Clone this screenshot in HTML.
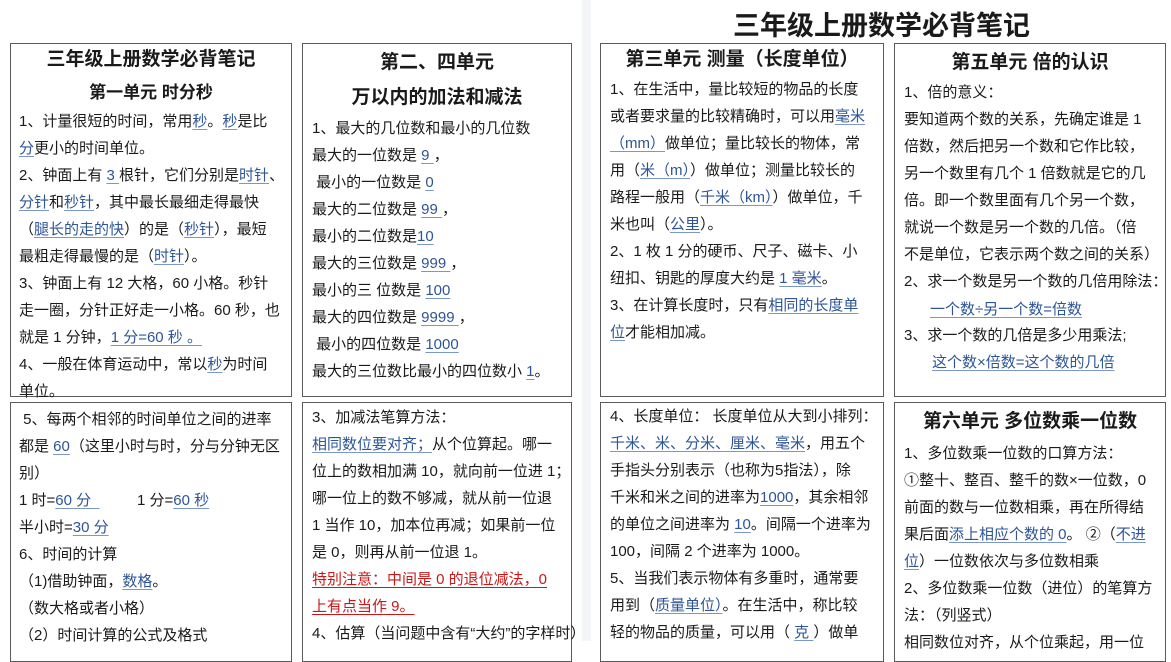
<!DOCTYPE html>
<html><head><meta charset="utf-8"><style>
*{margin:0;padding:0;box-sizing:border-box}
body{width:1171px;height:641px;overflow:hidden;background:#fff;position:relative;font-family:"Liberation Sans","Noto Sans CJK SC",sans-serif;color:#1a1a1a}
.strip{position:absolute;left:582px;top:0;width:9px;height:641px;background:#f4f5f8}
.box{position:absolute;border:1.5px solid #5a5a5a}
.l{position:absolute;white-space:nowrap;font-size:15px;line-height:20px;margin-top:2px}
.t{position:absolute;white-space:nowrap;font-weight:bold;text-align:center;line-height:26px}
.u{color:#2e5596;text-decoration:underline;text-decoration-color:#7b97c8;text-underline-offset:3px}
.r{color:#c81818;text-decoration:underline;text-underline-offset:3px}
</style></head><body>
<div class="strip"></div>
<div class="t" style="left:592px;width:579px;top:11px;font-size:27px;line-height:30px">三年级上册数学必背笔记</div>

<div class="box" style="left:10px;top:43px;width:282px;height:354px"></div>
<div class="box" style="left:302px;top:43px;width:270px;height:354px"></div>
<div class="box" style="left:600px;top:43px;width:284px;height:354px"></div>
<div class="box" style="left:894px;top:43px;width:272px;height:354px"></div>
<div class="box" style="left:10px;top:402px;width:282px;height:260px"></div>
<div class="box" style="left:302px;top:402px;width:270px;height:260px"></div>
<div class="box" style="left:600px;top:402px;width:284px;height:260px"></div>
<div class="box" style="left:894px;top:402px;width:272px;height:260px"></div>

<!-- Box A -->
<div class="t" style="left:10px;width:282px;top:47px;font-size:19px">三年级上册数学必背笔记</div>
<div class="t" style="left:10px;width:282px;top:80px;font-size:17px">第一单元 时分秒</div>
<div class="l" style="left:19px;top:110px">1、计量很短的时间，常用<span class="u">秒</span>。<span class="u">秒</span>是比</div>
<div class="l" style="left:19px;top:137px"><span class="u">分</span>更小的时间单位。</div>
<div class="l" style="left:19px;top:164px">2、钟面上有 <span class="u">3 </span>根针，它们分别是<span class="u">时针</span>、</div>
<div class="l" style="left:19px;top:191px"><span class="u">分针</span>和<span class="u">秒针</span>，其中最长最细走得最快</div>
<div class="l" style="left:19px;top:218px">（<span class="u">腿长的走的快</span>）的是（<span class="u">秒针</span>），最短</div>
<div class="l" style="left:19px;top:245px">最粗走得最慢的是（<span class="u">时针</span>）。</div>
<div class="l" style="left:19px;top:272px">3、钟面上有 12 大格，60 小格。秒针</div>
<div class="l" style="left:19px;top:299px">走一圈，分针正好走一小格。60 秒，也</div>
<div class="l" style="left:19px;top:326px">就是 1 分钟，<span class="u">1 分=60 秒 。</span></div>
<div class="l" style="left:19px;top:353px">4、一般在体育运动中，常以<span class="u">秒</span>为时间</div>
<div class="l" style="left:19px;top:380px">单位。</div>

<!-- Box B -->
<div class="t" style="left:302px;width:270px;top:50px;font-size:19px">第二、四单元</div>
<div class="t" style="left:302px;width:270px;top:85px;font-size:19px">万以内的加法和减法</div>
<div class="l" style="left:312px;top:117px">1、最大的几位数和最小的几位数</div>
<div class="l" style="left:312px;top:144px">最大的一位数是 <span class="u">9 </span>，</div>
<div class="l" style="left:312px;top:171px">&nbsp;最小的一位数是 <span class="u">0</span></div>
<div class="l" style="left:312px;top:198px">最大的二位数是 <span class="u">99 </span>，</div>
<div class="l" style="left:312px;top:225px">最小的二位数是<span class="u">10</span></div>
<div class="l" style="left:312px;top:252px">最大的三位数是 <span class="u">999 </span>，</div>
<div class="l" style="left:312px;top:279px">最小的三 位数是 <span class="u">100</span></div>
<div class="l" style="left:312px;top:306px">最大的四位数是 <span class="u">9999 </span>，</div>
<div class="l" style="left:312px;top:333px">&nbsp;最小的四位数是 <span class="u">1000</span></div>
<div class="l" style="left:312px;top:360px">最大的三位数比最小的四位数小 <span class="u">1</span>。</div>

<!-- Box C -->
<div class="t" style="left:600px;width:284px;top:47px;font-size:19px">第三单元 测量（长度单位）</div>
<div class="l" style="left:610px;top:78px">1、在生活中，量比较短的物品的长度</div>
<div class="l" style="left:610px;top:105px">或者要求量的比较精确时，可以用<span class="u">毫米</span></div>
<div class="l" style="left:610px;top:132px"><span class="u">（mm）</span>做单位；量比较长的物体，常</div>
<div class="l" style="left:610px;top:159px">用（<span class="u">米（m）</span>）做单位；测量比较长的</div>
<div class="l" style="left:610px;top:186px">路程一般用（<span class="u">千米（km）</span>）做单位，千</div>
<div class="l" style="left:610px;top:213px">米也叫（<span class="u">公里</span>）。</div>
<div class="l" style="left:610px;top:240px">2、1 枚 1 分的硬币、尺子、磁卡、小</div>
<div class="l" style="left:610px;top:267px">纽扣、钥匙的厚度大约是 <span class="u">1 毫米</span>。</div>
<div class="l" style="left:610px;top:294px">3、在计算长度时，只有<span class="u">相同的长度单</span></div>
<div class="l" style="left:610px;top:321px"><span class="u">位</span>才能相加减。</div>

<!-- Box D -->
<div class="t" style="left:894px;width:272px;top:50px;font-size:19px">第五单元 倍的认识</div>
<div class="l" style="left:904px;top:81px">1、倍的意义：</div>
<div class="l" style="left:904px;top:108px">要知道两个数的关系，先确定谁是 1</div>
<div class="l" style="left:904px;top:135px">倍数，然后把另一个数和它作比较，</div>
<div class="l" style="left:904px;top:162px">另一个数里有几个 1 倍数就是它的几</div>
<div class="l" style="left:904px;top:189px">倍。即一个数里面有几个另一个数，</div>
<div class="l" style="left:904px;top:216px">就说一个数是另一个数的几倍。（倍</div>
<div class="l" style="left:904px;top:243px">不是单位，它表示两个数之间的关系）</div>
<div class="l" style="left:904px;top:270px">2、求一个数是另一个数的几倍用除法：</div>
<div class="l" style="left:930px;top:298px"><span class="u">一个数÷另一个数=倍数</span></div>
<div class="l" style="left:904px;top:324px">3、求一个数的几倍是多少用乘法;</div>
<div class="l" style="left:932px;top:351px"><span class="u">这个数×倍数=这个数的几倍</span></div>

<!-- Box E -->
<div class="l" style="left:19px;top:408px">&nbsp;5、每两个相邻的时间单位之间的进率</div>
<div class="l" style="left:19px;top:435px">都是 <span class="u">60</span>（这里小时与时，分与分钟无区</div>
<div class="l" style="left:19px;top:462px">别）</div>
<div class="l" style="left:19px;top:489px">1 时=<span class="u">60 分 &nbsp;</span>&nbsp;&nbsp;&nbsp;&nbsp;&nbsp;&nbsp;&nbsp;&nbsp;&nbsp;1 分=<span class="u">60 秒</span></div>
<div class="l" style="left:19px;top:516px">半小时=<span class="u">30 分</span></div>
<div class="l" style="left:19px;top:543px">6、时间的计算</div>
<div class="l" style="left:19px;top:570px">（1)借助钟面，<span class="u">数格</span>。</div>
<div class="l" style="left:19px;top:597px">（数大格或者小格）</div>
<div class="l" style="left:19px;top:624px">（2）时间计算的公式及格式</div>

<!-- Box F -->
<div class="l" style="left:312px;top:406px">3、加减法笔算方法：</div>
<div class="l" style="left:312px;top:433px"><span class="u">相同数位要对齐；</span>从个位算起。哪一</div>
<div class="l" style="left:312px;top:460px">位上的数相加满 10，就向前一位进 1；</div>
<div class="l" style="left:312px;top:487px">哪一位上的数不够减，就从前一位退</div>
<div class="l" style="left:312px;top:514px">1 当作 10，加本位再减；如果前一位</div>
<div class="l" style="left:312px;top:541px">是 0，则再从前一位退 1。</div>
<div class="l" style="left:312px;top:568px"><span class="r">特别注意：中间是 0 的退位减法，0</span></div>
<div class="l" style="left:312px;top:595px"><span class="r">上有点当作 9。 </span></div>
<div class="l" style="left:312px;top:622px">4、估算（当问题中含有“大约”的字样时）</div>

<!-- Box G -->
<div class="l" style="left:610px;top:405px">4、长度单位： 长度单位从大到小排列：</div>
<div class="l" style="left:610px;top:432px"><span class="u">千米、米、分米、厘米、毫米</span>，用五个</div>
<div class="l" style="left:610px;top:459px">手指头分别表示（也称为5指法），除</div>
<div class="l" style="left:610px;top:486px">千米和米之间的进率为<span class="u">1000</span>，其余相邻</div>
<div class="l" style="left:610px;top:513px">的单位之间进率为 <span class="u">10</span>。间隔一个进率为</div>
<div class="l" style="left:610px;top:540px">100，间隔 2 个进率为 1000。</div>
<div class="l" style="left:610px;top:567px">5、当我们表示物体有多重时，通常要</div>
<div class="l" style="left:610px;top:594px">用到（<span class="u">质量单位）</span>。在生活中，称比较</div>
<div class="l" style="left:610px;top:621px">轻的物品的质量，可以用（ <span class="u">克 </span>）做单</div>

<!-- Box H -->
<div class="t" style="left:894px;width:272px;top:409px;font-size:19px">第六单元 多位数乘一位数</div>
<div class="l" style="left:904px;top:442px">1、多位数乘一位数的口算方法：</div>
<div class="l" style="left:904px;top:469px">①整十、整百、整千的数×一位数，0</div>
<div class="l" style="left:904px;top:496px">前面的数与一位数相乘，再在所得结</div>
<div class="l" style="left:904px;top:523px">果后面<span class="u">添上相应个数的 0</span>。 ②（<span class="u">不进</span></div>
<div class="l" style="left:904px;top:550px"><span class="u">位</span>）一位数依次与多位数相乘</div>
<div class="l" style="left:904px;top:577px">2、多位数乘一位数（进位）的笔算方</div>
<div class="l" style="left:904px;top:604px">法：（列竖式）</div>
<div class="l" style="left:904px;top:631px">相同数位对齐，从个位乘起，用一位</div>
</body></html>
